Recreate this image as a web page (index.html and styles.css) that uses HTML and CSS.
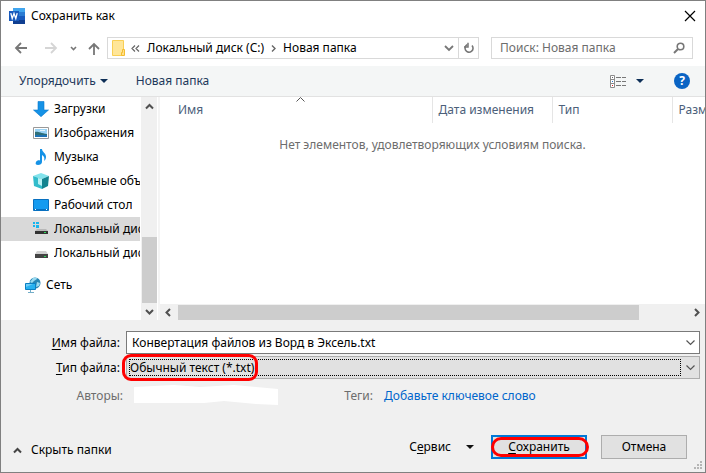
FILE: index.html
```html
<!DOCTYPE html>
<html lang="ru">
<head>
<meta charset="utf-8">
<title>Сохранить как</title>
<link rel="stylesheet" href="styles.css">
</head>
<body>
<main class="dialog">
  <header class="titlebar">
    <svg class="app-icon" width="16" height="16" viewBox="0 0 16 16" aria-hidden="true">
      <path fill="#41a5ee" d="M4 0h12v4H4z"/><path fill="#2b7cd3" d="M4 4h12v4H4z"/><path fill="#185abd" d="M4 8h12v4H4z"/><path fill="#103f91" d="M4 12h12v4H4z"/>
      <path fill="#185abd" d="M0 3h10v10H0z"/><path fill="none" stroke="#fff" stroke-width="1.3" d="M1.800 5.200l1.400 5.300L5 5.500l1.800 5 1.400-5.300"/>
    </svg>
    <h1 class="title">Сохранить как</h1>
    <button class="plain close" aria-label="Закрыть"><svg width="12" height="12" viewBox="0 0 12 12"><path d="M1 1l10 10M11 1L1 11" stroke="#000" stroke-width="1.200"/></svg></button>
  </header>

  <nav class="navbar">
    <div class="history">
      <button class="plain" aria-label="Назад"><svg width="14" height="12" viewBox="0 0 14 12"><path d="M13 6H2M7 1L2 6l5 5" fill="none" stroke="#777" stroke-width="1.800"/></svg></button>
      <button class="plain forward" aria-label="Вперёд"><svg width="14" height="12" viewBox="0 0 14 12"><path d="M1 6h11M7 1l5 5-5 5" fill="none" stroke="#d5d5d5" stroke-width="1.800"/></svg></button>
      <button class="plain recent" aria-label="Недавние"><svg width="7" height="5" viewBox="0 0 7 5"><path d="M1 1l2.500 2.500L6 1" fill="none" stroke="#777" stroke-width="1.600"/></svg></button>
      <button class="plain" aria-label="Вверх"><svg width="12" height="13" viewBox="0 0 12 13"><path d="M6 13V2M1 7l5-5 5 5" fill="none" stroke="#777" stroke-width="1.800"/></svg></button>
    </div>
    <div class="address">
      <svg width="14" height="17" viewBox="0 0 14 17" aria-hidden="true"><path fill="#ffe699" stroke="#f9cf55" d="M.5.5h11v15H.5z"/><path fill="#ffe08a" stroke="#f5bd2f" d="M10.500 9.500h2v6h-3v-3h1z"/></svg>
      <svg class="crumbs-more" width="9" height="7" viewBox="0 0 9 7" aria-hidden="true"><path d="M4 .5l-3 3 3 3M8 .5l-3 3 3 3" fill="none" stroke="#666" stroke-width="1.200"/></svg>
      <a class="crumb" href="#">Локальный диск (C:)</a>
      <svg class="crumb-sep" width="5" height="7" viewBox="0 0 5 7" aria-hidden="true"><path d="M1 .5l3 3-3 3" fill="none" stroke="#666" stroke-width="1.400"/></svg>
      <a class="crumb" href="#">Новая папка</a>
      <button class="plain address-drop" aria-label="Предыдущие расположения"><svg width="10" height="7" viewBox="0 0 10 7"><path d="M1 1l4 4 4-4" fill="none" stroke="#777" stroke-width="1.800"/></svg></button>
      <button class="plain refresh" aria-label="Обновить"><svg width="12" height="12" viewBox="0 0 12 12"><path d="M9 3.500A4 4 0 1 1 4.500 2.500" fill="none" stroke="#777" stroke-width="1.600"/><path d="M5 .8v4.200H1" fill="none" stroke="#777" stroke-width="1.500"/></svg></button>
    </div>
    <div class="search">
      <input type="search" aria-label="Поиск" placeholder="Поиск: Новая папка">
      <svg width="12" height="12" viewBox="0 0 12 12" aria-hidden="true"><circle cx="7.500" cy="4.500" r="3.300" fill="none" stroke="#777" stroke-width="1.600"/><path d="M5 7l-4 4" stroke="#777" stroke-width="2"/></svg>
    </div>
  </nav>

  <div class="toolbar">
    <button class="plain tool">Упорядочить <svg width="8" height="4" viewBox="0 0 8 4"><path d="M0 0h8L4 4z" fill="#0d2f57"/></svg></button>
    <button class="plain tool">Новая папка</button>
    <button class="plain view" aria-label="Вид"><svg width="17" height="13" viewBox="0 0 17 13"><path d="M.5.5h4v12h-4zM.5 4.500h4M.5 8.500h4" fill="#fff" stroke="#8b8b8b"/><path d="M2 2h1v1H2z" fill="#666"/><path d="M2 6h1v1H2z" fill="#2b7cd3"/><path d="M2 10h1v1H2z" fill="#d22"/><path d="M6 2.500h5M12 2.500h4M6 6.500h5M12 6.500h4M6 10.500h5M12 10.500h4" stroke="#777"/></svg><svg width="8" height="4" viewBox="0 0 8 4"><path d="M0 0h8L4 4z" fill="#0d2f57"/></svg></button>
    <button class="plain help" aria-label="Справка">?</button>
  </div>

  <div class="explorer">
    <aside class="sidebar">
      <ul class="tree">
        <li class="node"><svg width="16" height="16" viewBox="0 0 16 16"><path fill="#1592e6" stroke="#0b78cc" stroke-width=".6" d="M5 .5h6V9h4.500L8 15.700.500 9H5z"/></svg><span>Загрузки</span></li>
        <li class="node"><svg width="16" height="16" viewBox="0 0 16 16"><path fill="#fff" stroke="#999" d="M.5 2.500h15v11H.5z"/><path fill="#9bd3f5" d="M2 4h12v8H2z"/><path fill="#2f6f78" d="M2 7c3-1 5 1 12 2v1H2z"/><path fill="#1d72b5" d="M2 10h12v2H2z"/><path fill="#e5f5fd" d="M7 5h5v1H7z"/></svg><span>Изображения</span></li>
        <li class="node"><svg width="16" height="16" viewBox="0 0 16 16"><path fill="#1592e6" d="M7 0h2c0 3 4 4 4 8 0 2-1 3-2 4 1-3 0-5-2-6v7c0 2-2 3-4 3s-3-1-2-3c.6-1.200 2.500-2 4-1.500z"/></svg><span>Музыка</span></li>
        <li class="node"><svg width="16" height="16" viewBox="0 0 16 16"><path fill="#83e3ec" d="M0 3l8-3 8 3-7 3z"/><path fill="#32bccb" d="M0 3l9 3v10l-8-3z"/><path fill="#12838f" d="M9 6l7-3-1 10-6 3z"/><path fill="#b8f1f4" d="M5 5l4 1v7l-4-2z"/></svg><span>Объемные объекты</span></li>
        <li class="node"><svg width="16" height="16" viewBox="0 0 16 16"><path fill="#159bf0" stroke="#0870c0" d="M.5 2.500h15v11H.5z"/><path fill="#0870c0" d="M1 12h14v1H1z"/><path fill="#fff" d="M2 12h1v1H2zM13 12h1v1h-1z"/></svg><span>Рабочий стол</span></li>
        <li class="node selected"><svg width="16" height="16" viewBox="0 0 16 16"><path fill="#16b5ee" d="M0 1h2v2H0zM3 1h3v2H3zM0 4h2v2H0zM3 4h3v3H3z"/><path fill="#b8b8b8" d="M4 8h9l2 2H2z"/><path fill="#333" d="M2 10h13v3H2z"/><path fill="#2cdc5a" d="M11 11h2v1h-2z"/></svg><span>Локальный диск (C:)</span></li>
        <li class="node"><svg width="16" height="16" viewBox="0 0 16 16"><path fill="#d0d0d0" d="M4 6h9l2 3H2z"/><path fill="#444" d="M2 9h13v4H2z"/><path fill="#2cdc5a" d="M11 11h2v1h-2z"/></svg><span>Локальный диск (D:)</span></li>
        <li class="node network"><svg width="16" height="16" viewBox="0 0 16 16"><circle cx="10" cy="6" r="5.500" fill="#2686b5"/><path fill="#9adaf0" d="M8 1c3-1 4 0 4 1l-3 2-2 2-2-1zM12 5l3 1-1 3-3 1z"/><path fill="#26b1f0" stroke="#0b7fc2" d="M.5 6.500h10v6H.5z"/><path fill="#6fcdf7" d="M1 7h7L1 10z"/><path stroke="#73adc8" d="M5.500 13v2M3 15.500h6"/></svg><span>Сеть</span></li>
      </ul>
      <div class="scroll-y">
        <svg width="9" height="9" viewBox="0 0 9 9"><path d="M1 6.500L4.500 3 8 6.500" fill="none" stroke="#505050" stroke-width="2"/></svg>
        <div class="thumb-y"></div>
        <svg width="9" height="9" viewBox="0 0 9 9"><path d="M1 3l3.500 3.500L8 3" fill="none" stroke="#505050" stroke-width="2"/></svg>
      </div>
    </aside>
    <section class="content">
      <table class="files">
        <thead><tr><th class="name">Имя<svg class="sort" width="9" height="5" viewBox="0 0 9 5"><path d="M.5 4.500l4-4 4 4" fill="none" stroke="#555"/></svg></th><th class="date">Дата изменения</th><th class="type">Тип</th><th class="size">Размер</th></tr></thead>
        <tbody><tr><td colspan="4">Нет элементов, удовлетворяющих условиям поиска.</td></tr></tbody>
      </table>
      <div class="scroll-x">
        <svg width="9" height="9" viewBox="0 0 9 9"><path d="M6 1L2.500 4.500 6 8" fill="none" stroke="#505050" stroke-width="2"/></svg>
        <div class="track-x"><div class="thumb-x"></div></div>
        <svg width="9" height="9" viewBox="0 0 9 9"><path d="M3 1l3.500 3.500L3 8" fill="none" stroke="#505050" stroke-width="2"/></svg>
      </div>
    </section>
  </div>

  <form class="details">
    <label for="filename"><u>И</u>мя файла:</label>
    <div class="combo">
      <input id="filename" type="text" value="Конвертация файлов из Ворд в Эксель.txt">
      <svg class="chevron" width="9" height="6" viewBox="0 0 9 6"><path d="M.5.5l4 4 4-4" fill="none" stroke="#555" stroke-width="1.200"/></svg>
    </div>
    <label for="filetype"><u>Т</u>ип файла:</label>
    <div class="combo choice">
      <select id="filetype"><option>Обычный текст (*.txt)</option></select>
      <svg class="chevron" width="9" height="6" viewBox="0 0 9 6"><path d="M.5.5l4 4 4-4" fill="none" stroke="#555" stroke-width="1.200"/></svg>
      <span class="ring ring-type"></span>
    </div>
  </form>

  <div class="meta">
    <span class="meta-label authors">Авторы:</span>
    <svg class="eraser" width="145" height="21" viewBox="0 0 145 21" aria-hidden="true"><path fill="#fff" d="M0 2L40 0L66 2L100 0L122 2L144 4V20L122 19L90 16L70 18L40 18L20 18L0 18z"/></svg>
    <span class="meta-label tags">Теги:</span>
    <a class="add-tag" href="#">Добавьте ключевое слово</a>
  </div>

  <footer class="actions">
    <button class="plain hide"><svg width="9" height="7" viewBox="0 0 9 7"><path d="M1 5.500L4.500 2 8 5.500" fill="none" stroke="#444" stroke-width="2"/></svg>Скрыть папки</button>
    <button class="plain service"><span>С<u>е</u>рвис</span><svg width="8" height="4" viewBox="0 0 8 4"><path d="M0 0h8L4 4z" fill="#111"/></svg></button>
    <button class="push primary"><u>С</u>охранить<span class="ring ring-save"></span></button>
    <button class="push">Отмена</button>
    <svg class="grip" width="8" height="8" viewBox="0 0 8 8" aria-hidden="true"><path fill="#b5b5b5" d="M6 0h2v2H6zM3 3h2v2H3zM6 3h2v2H6zM0 6h2v2H0zM3 6h2v2H3zM6 6h2v2H6z"/></svg>
  </footer>
</main>
</body>
</html>
```
FILE: styles.css
```css
* { box-sizing: border-box; }

body {
  margin: 0;
  font: 12px/16px "Noto Sans", "Open Sans", sans-serif;
  color: #000;
}

svg { display: block; flex: none; }
a { color: inherit; text-decoration: none; }
button, input, select { font: inherit; color: inherit; }
u { text-underline-offset: 2px; }

.plain {
  display: flex;
  align-items: center;
  padding: 0;
  border: 0;
  background: none;
  white-space: nowrap;
}

.dialog {
  display: flex;
  flex-direction: column;
  min-height: 100vh;
  border: 1px solid #808080;
  background: #f0f0f0;
}

.titlebar {
  display: flex;
  align-items: center;
  height: 29px;
  padding: 0 9px 0 8px;
  background: #fff;
}
.title { margin: 0 0 0 6px; font-size: 12px; font-weight: 400; }
.close { margin-left: auto; }

.navbar {
  display: flex;
  align-items: center;
  height: 36px;
  padding: 0 12px 0 13px;
  background: #fff;
}
.history {
  display: flex;
  align-items: center;
  width: 93px;
}
.forward { margin-left: 16px; }
.recent { margin: 0 11px 0 12px; }
.address {
  display: flex;
  flex: 1;
  align-items: center;
  min-width: 0;
  height: 22px;
  padding-left: 4px;
  border: 1px solid #d9d9d9;
}
.crumbs-more { margin: 0 7px 0 5px; }
.crumb { white-space: nowrap; }
.crumb-sep { margin: 0 7px; }
.address-drop { margin: 0 4px 0 auto; }
.refresh {
  justify-content: center;
  align-self: stretch;
  width: 20px;
  border-left: 1px solid #d9d9d9;
}
.search {
  display: flex;
  align-items: center;
  width: 202px;
  height: 22px;
  margin-left: 12px;
  padding: 0 7px 0 8px;
  border: 1px solid #d9d9d9;
}
.search input {
  flex: 1;
  min-width: 0;
  padding: 0;
  border: 0;
  outline: 0;
  background: none;
}
.search input::placeholder { color: #6d6d6d; opacity: 1; }

.toolbar {
  display: flex;
  align-items: center;
  gap: 28px;
  height: 31px;
  padding: 0 15px 0 18px;
  border-bottom: 1px solid #e2e2e2;
  background: #f4f6f6;
}
.tool { gap: 4px; color: #1e395b; }
.view { gap: 9px; margin-left: auto; margin-right: 2px; }
.help {
  justify-content: center;
  width: 16px;
  height: 16px;
  border-radius: 50%;
  background: #0a64c4;
  color: #fff;
  font-weight: 700;
}

.explorer {
  display: flex;
  flex: 1;
  background: #fff;
}
.sidebar {
  display: flex;
  width: 159px;
  border-right: 2px solid #f4f4f4;
}
.tree {
  flex: 1;
  min-width: 0;
  margin: 0;
  padding: 0 0 22px;
  list-style: none;
}
.node {
  display: flex;
  align-items: center;
  gap: 5px;
  height: 24px;
  padding-left: 32px;
  overflow: hidden;
  white-space: nowrap;
}
.node span { min-width: 0; overflow: hidden; }
.selected { background: #d9d9d9; }
.network { margin-top: 8px; padding-left: 24px; }
.scroll-y {
  display: flex;
  flex-direction: column;
  align-items: center;
  justify-content: space-between;
  width: 16px;
  margin: 0 1px;
  padding: 5px 0 4px;
  background: #f0f0f0;
}
.thumb-y {
  width: 15px;
  height: 66px;
  margin: auto 0 4px;
  background: #cdcdcd;
}

.content {
  display: flex;
  flex: 1;
  flex-direction: column;
  min-width: 0;
  overflow: hidden;
}
.files {
  width: 100%;
  table-layout: fixed;
  border-collapse: collapse;
}
.files th {
  position: relative;
  height: 26px;
  padding: 0 0 0 6px;
  overflow: hidden;
  border-right: 1px solid #e5e5e5;
  color: #4c607a;
  font-weight: 400;
  text-align: left;
  white-space: nowrap;
}
.files .name { padding-left: 18px; }
.files .date, .files .type { width: 120px; }
.files .size { width: 33px; border: 0; }
.sort { position: absolute; top: 0; left: 50%; }
.files td {
  padding: 14px 0;
  color: #6d6d6d;
  text-align: center;
}
.scroll-x {
  display: flex;
  align-items: center;
  height: 16px;
  margin-top: auto;
  padding: 0 4px;
  background: #f0f0f0;
}
.track-x { flex: 1; padding: 0 53px 0 5px; }
.thumb-x { height: 15px; background: #cdcdcd; }

.details {
  display: grid;
  grid-template-columns: 119px 1fr;
  gap: 2px 6px;
  align-items: center;
  padding: 11px 5px 0 0;
}
.details label { text-align: right; white-space: nowrap; }
.combo {
  position: relative;
  display: flex;
  align-items: center;
  height: 23px;
  border: 1px solid #7a7a7a;
  background: #fff;
}
.combo input, .combo select {
  flex: 1;
  min-width: 0;
  height: 17px;
  padding: 0 5px;
  border: 0;
  outline: 0;
  background: none;
}
.combo .chevron { margin: 0 4px; }
.choice { border-color: #adadad; background: #e1e1e1; }
.choice select {
  margin: 0 1px 0 2px;
  padding: 0;
  border: 1px dotted #000;
  appearance: none;
  line-height: 15px;
}
.ring {
  position: absolute;
  border: 3px solid #f00;
  pointer-events: none;
}
.ring-type {
  top: -3px;
  left: -5px;
  width: 136px;
  height: 27px;
  border-radius: 9px;
}

.meta {
  display: flex;
  align-items: center;
  height: 21px;
  margin-top: 6px;
}
.meta-label { color: #6d6d6d; text-align: right; }
.authors { width: 122px; }
.eraser { margin-left: 11px; }
.tags { width: 94px; }
.add-tag { margin-left: 11px; color: #0066cc; }

.actions {
  position: relative;
  display: flex;
  align-items: center;
  padding: 29px 18px 13px 12px;
}
.hide { gap: 9px; margin-top: 6px; }
.service { gap: 15px; margin-left: auto; }
.push {
  position: relative;
  width: 86px;
  height: 24px;
  margin-left: 14px;
  padding: 0;
  border: 1px solid #adadad;
  background: #e1e1e1;
}
.primary {
  width: 96px;
  margin-left: 17px;
  border: 2px solid #0078d7;
}
.ring-save {
  inset: 0 -4px 0 -2px;
  border-radius: 11px;
}
.grip { position: absolute; right: 3px; bottom: 3px; }
```
